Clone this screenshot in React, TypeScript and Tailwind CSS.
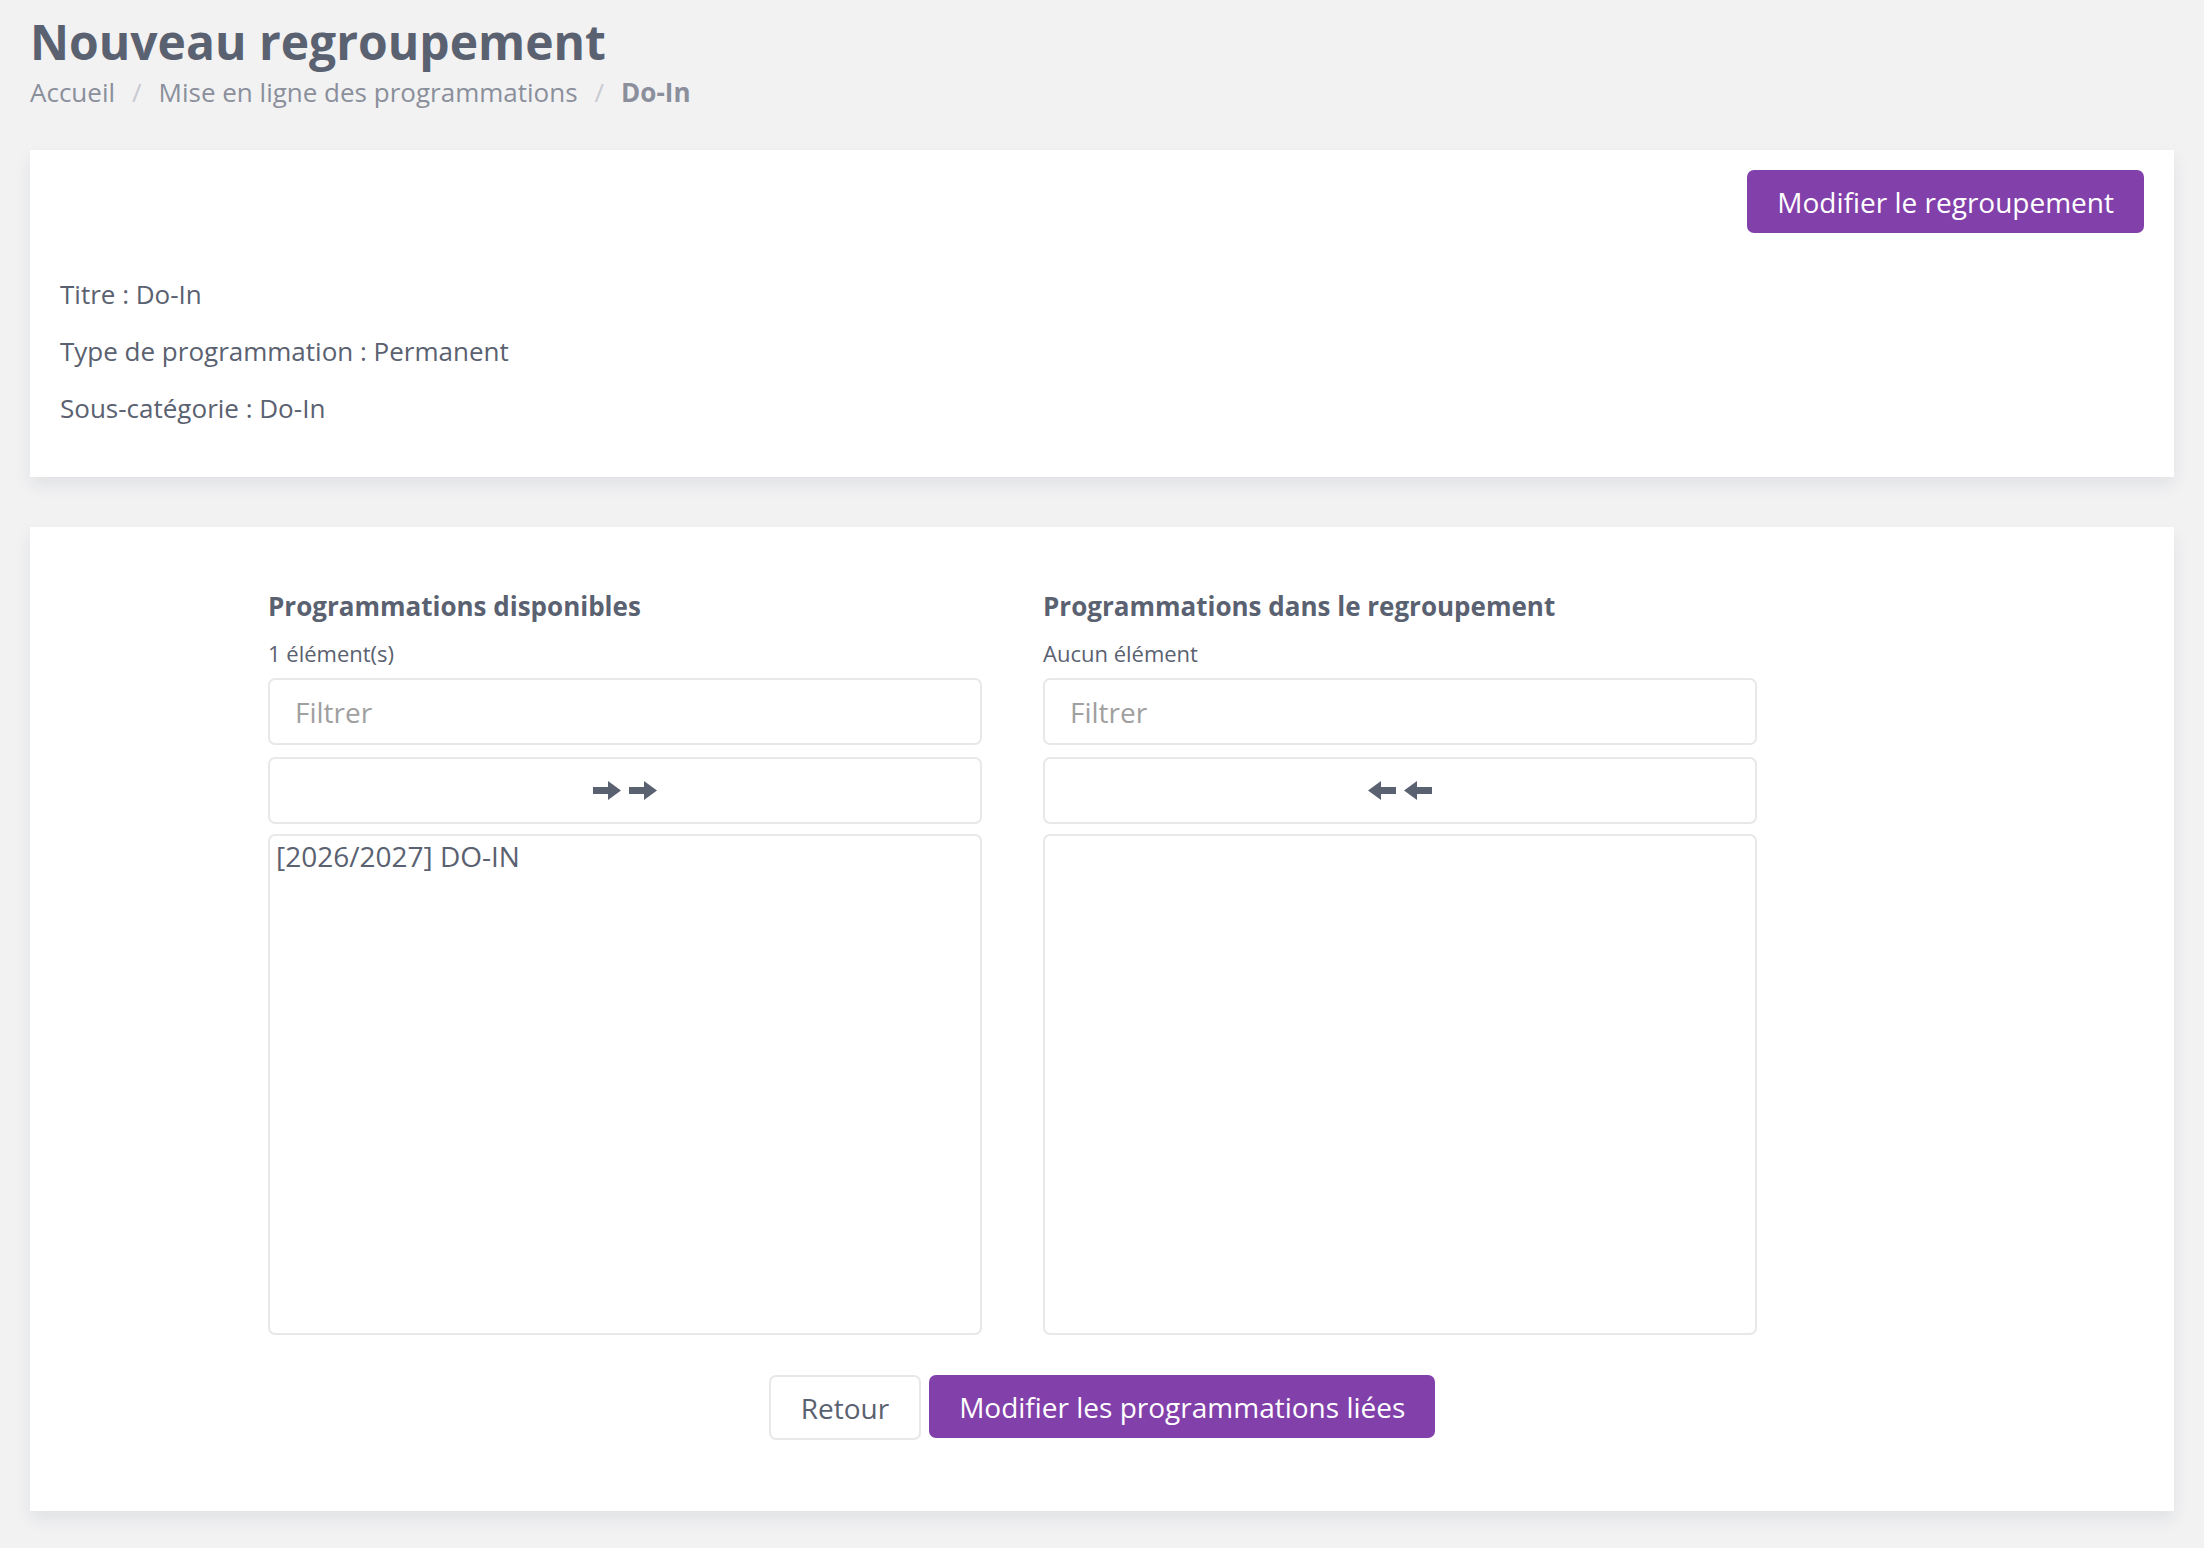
import React from "react";

function ArrowRight() {
  return (
    <svg width="28" height="19" viewBox="0 0 28 19" fill="#5a6170">
      <path d="M0 6h15V0l13 9.5L15 19v-6H0z" />
    </svg>
  );
}
function ArrowLeft() {
  return (
    <svg width="28" height="19" viewBox="0 0 28 19" fill="#5a6170">
      <path d="M28 6H13V0L0 9.5 13 19v-6h15z" />
    </svg>
  );
}

function ListColumn({ title, count, dir, items }: { title: string; count: string; dir: "right" | "left"; items: string[] }) {
  return (
    <div className="flex w-[714px] flex-col">
      <div className="text-[26px] font-bold leading-[38px] text-[#5a6170]">{title}</div>
      <div className="mt-[13px] text-[22px] leading-[30px] text-[#5a6170]">{count}</div>
      <div className="mt-[10px] flex h-[67px] items-center rounded-[7px] border-2 border-[#e8e8e8] px-[25px] text-[28px] text-[#a0a0a0]">
        Filtrer
      </div>
      <div className="mt-[12px] flex h-[67px] items-center justify-center gap-[8px] rounded-[7px] border-2 border-[#e8e8e8]">
        {dir === "right" ? (
          <>
            <ArrowRight />
            <ArrowRight />
          </>
        ) : (
          <>
            <ArrowLeft />
            <ArrowLeft />
          </>
        )}
      </div>
      <div className="mt-[10px] h-[501px] rounded-[7px] border-2 border-[#e8e8e8] px-[6px] py-[1px]">
        {items.map((it) => (
          <div key={it} className="text-[28px] leading-[38px] text-[#5a6170]">
            {it}
          </div>
        ))}
      </div>
    </div>
  );
}

export default function App() {
  return (
    <div className="min-h-[1548px] w-full bg-[#f2f2f3] px-[30px] pt-[10px] pb-[36px]" style={{ fontFamily: '"Open Sans", "Noto Sans", sans-serif' }}>
      <h1 className="text-[48px] font-bold leading-[64px] text-[#5a6170]">Nouveau regroupement</h1>
      <div className="flex items-center text-[26px] leading-[36px] text-[#8a8f9b]">
        <span>Accueil</span>
        <span className="px-[17px] text-[#c8cad0]">/</span>
        <span>Mise en ligne des programmations</span>
        <span className="px-[17px] text-[#c8cad0]">/</span>
        <span className="font-bold">Do-In</span>
      </div>

      <div className="mt-[40px] bg-white px-[30px] pt-[20px] pb-[50px] shadow-[0_8px_16px_rgba(30,40,70,0.08)]">
        <div className="flex justify-end">
          <button className="h-[63px] rounded-[7px] bg-[#8240ab] px-[30px] text-[28px] text-white">Modifier le regroupement</button>
        </div>
        <div className="mt-[42px] flex flex-col gap-[19px] text-[26px] leading-[38px] text-[#5a6170]">
          <div>Titre : Do-In</div>
          <div>Type de programmation : Permanent</div>
          <div>Sous-catégorie : Do-In</div>
        </div>
      </div>

      <div className="mt-[50px] bg-white pt-[60px] pb-[71px] shadow-[0_8px_16px_rgba(30,40,70,0.08)]">
        <div className="flex gap-[61px] pl-[238px]">
          <ListColumn title="Programmations disponibles" count="1 élément(s)" dir="right" items={["[2026/2027] DO-IN"]} />
          <ListColumn title="Programmations dans le regroupement" count="Aucun élément" dir="left" items={[]} />
        </div>
        <div className="mt-[40px] flex justify-center gap-[8px]">
          <button className="h-[65px] rounded-[7px] border-2 border-[#e8e8e8] bg-white px-[30px] text-[28px] text-[#5a6170]">Retour</button>
          <button className="h-[63px] rounded-[7px] bg-[#8240ab] px-[30px] text-[28px] text-white">Modifier les programmations liées</button>
        </div>
      </div>
    </div>
  );
}
